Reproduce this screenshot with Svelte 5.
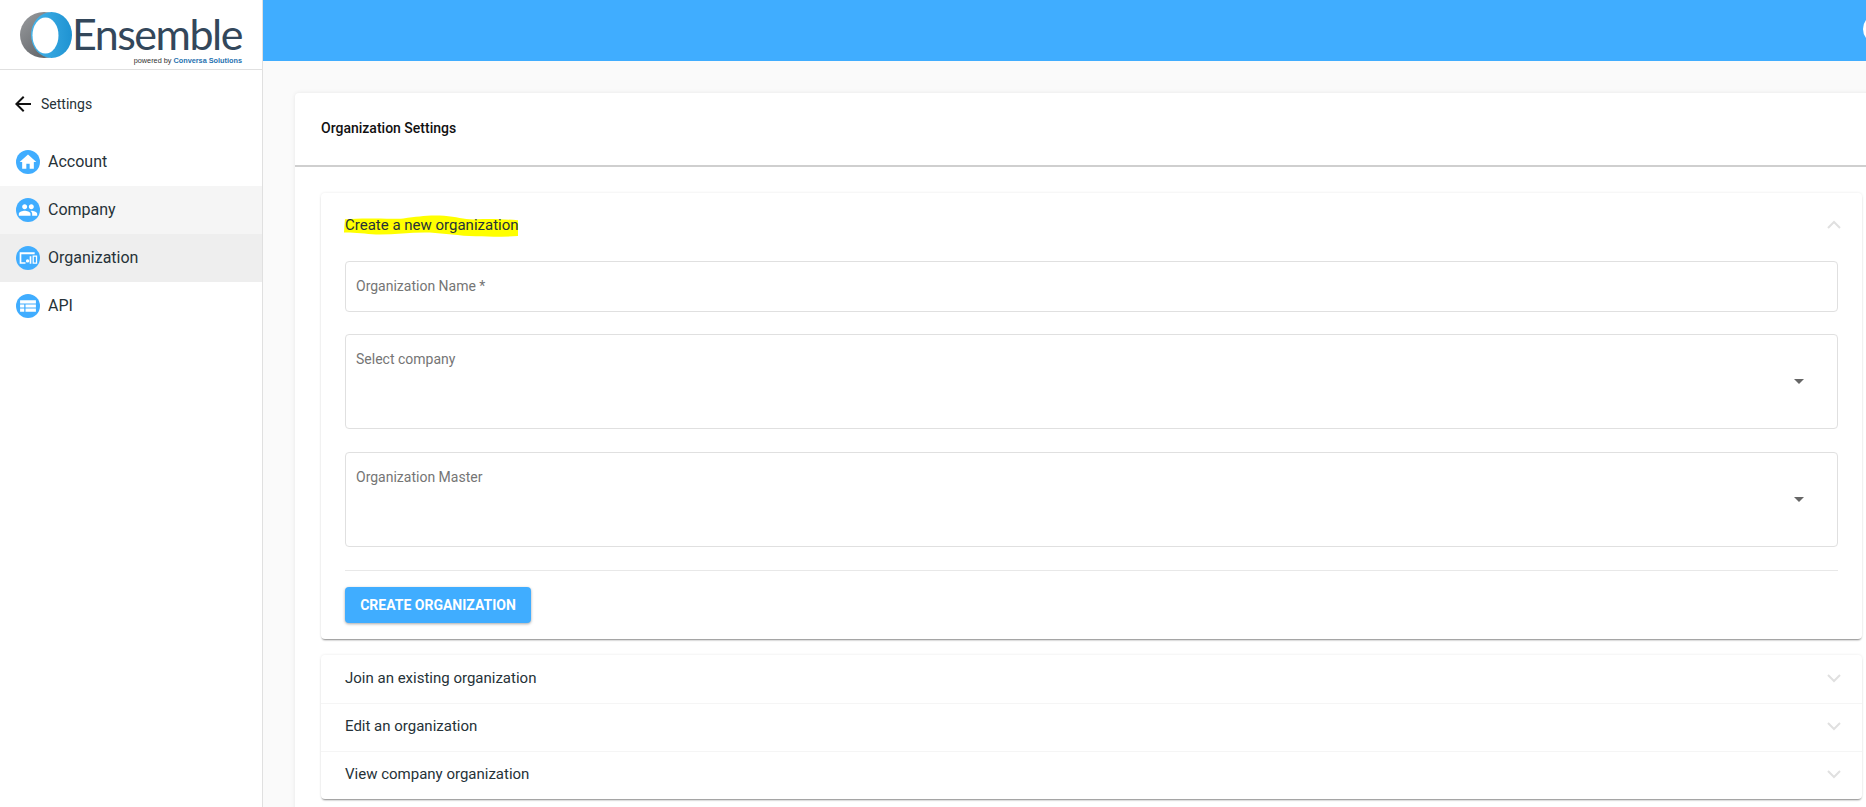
<script>
	const nav = [
		{ label: 'Account', icon: 'home' },
		{ label: 'Company', icon: 'people', state: 'hover' },
		{ label: 'Organization', icon: 'org', state: 'active' },
		{ label: 'API', icon: 'table' }
	];
	const closedPanels = ['Join an existing organization', 'Edit an organization', 'View company organization'];
</script>

<div class="page">
	<aside class="sidebar">
		<div class="brand">
			<svg class="ring" viewBox="0 0 52 46" width="52" height="46">
				<defs>
					<linearGradient id="ringGrey" x1="0" x2="1" y1="0" y2="1">
						<stop offset="0" stop-color="#9a9c9f" />
						<stop offset="1" stop-color="#505458" />
					</linearGradient>
					<linearGradient id="ringBlue" x1="0" x2="1" y1="0" y2="0">
						<stop offset="0" stop-color="#45b4ea" />
						<stop offset="1" stop-color="#1f93d2" />
					</linearGradient>
				</defs>
				<ellipse cx="24" cy="23" rx="24" ry="23" fill="url(#ringGrey)" />
				<ellipse cx="31.500" cy="23" rx="20.500" ry="23" fill="url(#ringBlue)" />
				<ellipse cx="25.500" cy="23.500" rx="13" ry="18" fill="#fff" />
			</svg>
			<div class="wordmark">
				<span class="name">Ensemble</span>
				<span class="powered">powered by <b>Conversa Solutions</b></span>
			</div>
		</div>

		<div class="back">
			<svg viewBox="0 0 24 24" width="24" height="24"><path fill="#111" d="M20 11H7.830l5.590-5.590L12 4l-8 8 8 8 1.410-1.410L7.830 13H20v-2z" /></svg>
			<span>Settings</span>
		</div>

		<nav>
			{#each nav as item}
				<div class="nav-item {item.state ?? ''}">
					<span class="nav-icon">
						<svg viewBox="0 0 24 24" width="20" height="20" fill="#fff">
							{#if item.icon === 'home'}
								<path d="M10 20v-6h4v6h5v-8h3L12 3 2 12h3v8z" />
							{:else if item.icon === 'people'}
								<path d="M16 11c1.660 0 2.990-1.340 2.990-3S17.660 5 16 5s-3 1.340-3 3 1.340 3 3 3zm-8 0c1.660 0 2.990-1.340 2.990-3S9.660 5 8 5 5 6.340 5 8s1.340 3 3 3zm0 2c-2.330 0-7 1.170-7 3.500V19h14v-2.500C15 14.170 10.330 13 8 13zm8 0c-.29 0-.62.02-.97.05 1.160.84 1.970 1.970 1.970 3.450V19h6v-2.500c0-2.330-4.670-3.500-7-3.500z" />
							{:else if item.icon === 'org'}
								<path d="M2 5h18v2.500H4V17h5v2H2zM14 10h2v9h-2zM17.500 9H23v10h-5.500zM19 10.500v7h2.500v-7zM11.500 13.500a2 2 0 1 1 0 4 2 2 0 0 1 0-4z" />
							{:else}
								<path d="M2.500 5h19v4h-19zM2.500 10.200h5v3.600h-5zM9 10.200h12.500v3.600H9zM2.500 15h5v4h-5zM9 15h12.500v4H9z" />
							{/if}
						</svg>
					</span>
					<span class="nav-label">{item.label}</span>
				</div>
			{/each}
		</nav>
	</aside>

	<div class="body">
		<header class="topbar"><span class="avatar"></span></header>

		<main class="content">
			<section class="card">
				<div class="card-title">Organization Settings</div>
				<div class="card-body">
					<div class="panel">
						<div class="panel-head open">
							<svg class="marker" viewBox="0 0 180 26" width="175" height="23" preserveAspectRatio="none">
								<path fill="#ffff00" d="M2 6C22 4 48 6 62 5 78 3 86 1 104 2c14 1 22 5 34 4 14-1 26 0 42 1v18c-18 1-32 1-50 0C114 24 98 21 84 21 66 21 48 24 30 23 20 22 8 21 1 21z" />
							</svg>
							<span class="head-text">Create a new organization</span>
							<svg class="chev" viewBox="0 0 24 24" width="24" height="24"><path fill="none" stroke="#e0e0e0" stroke-width="2" d="M6 15l6-6 6 6" /></svg>
						</div>
						<div class="panel-body">
							<div class="field short"><span>Organization Name *</span></div>
							<div class="field"><span>Select company</span><i class="caret"></i></div>
							<div class="field"><span>Organization Master</span><i class="caret"></i></div>
							<hr />
							<button type="button">CREATE ORGANIZATION</button>
						</div>
					</div>

					<div class="panel stack">
						{#each closedPanels as title}
							<div class="panel-head">
								<span class="head-text">{title}</span>
								<svg class="chev" viewBox="0 0 24 24" width="24" height="24"><path fill="none" stroke="#e0e0e0" stroke-width="2" d="M6 9l6 6 6-6" /></svg>
							</div>
						{/each}
					</div>
				</div>
			</section>
		</main>
	</div>
</div>

<style>
	:global(body) { margin: 0; overflow: hidden; background: #fafafa; }
	.page { display: flex; height: 807px; overflow: hidden; font-family: Roboto, "Liberation Sans", sans-serif; color: #263238; }

	.sidebar { flex: 0 0 263px; width: 263px; box-sizing: border-box; background: #fff; border-right: 1px solid #e0e0e0; overflow: hidden; }
	.brand { height: 70px; box-sizing: border-box; border-bottom: 1px solid #e0e0e0; display: flex; align-items: flex-start; padding: 12px 0 0 20px; }
	.ring { flex: none; }
	.wordmark { display: flex; flex-direction: column; margin-left: 0; width: 170px; }
	.name { font-family: Lato, sans-serif; font-size: 43px; line-height: 43px; letter-spacing: -1.500px; color: #33475b; white-space: nowrap; }
	.powered { font-family: "Liberation Sans", sans-serif; font-size: 7.300px; line-height: 9px; margin-top: 1px; text-align: right; color: #333; white-space: nowrap; }
	.powered b { color: #1f72b0; }

	.back { display: flex; align-items: center; gap: 6px; height: 68px; padding-left: 11px; font-size: 14px; box-sizing: border-box; }
	.nav-item { display: flex; align-items: center; gap: 8px; height: 48px; padding-left: 16px; font-size: 16px; }
	.nav-label { margin-bottom: 2px; }
	.nav-item.hover { background: #f5f5f5; }
	.nav-item.active { background: #eeeeee; }
	.nav-icon { width: 24px; height: 24px; border-radius: 50%; background: #40adff; display: flex; align-items: center; justify-content: center; }

	.body { flex: 1; min-width: 0; }
	.topbar { height: 61px; background: #40adff; position: relative; overflow: hidden; }
	.avatar { position: absolute; left: 1600px; top: 14px; width: 30px; height: 30px; border-radius: 50%; background: #fff; }

	.content { padding: 32px 0 0 32px; }
	.card { width: 1600px; background: #fff; border-radius: 4px; box-shadow: 0 0 4px rgba(0,0,0,0.08); }
	.card-title { height: 74px; box-sizing: border-box; border-bottom: 2px solid #cfcfcf; display: flex; align-items: center; padding: 0 0 2px 26px; font-size: 14px; font-weight: 500; color: #111; }
	.card-body { padding: 26px 0 40px 26px; }

	.panel { width: 1541px; background: #fff; border-radius: 4px; box-shadow: 0 2px 2px -1px rgba(0,0,0,0.45), 0 0 3px rgba(0,0,0,0.09); }
	.panel.stack { margin-top: 16px; }
	.panel-head { position: relative; height: 48px; box-sizing: border-box; display: flex; align-items: center; justify-content: space-between; padding: 0 16px 0 24px; font-size: 15px; }
	.panel-head.open { height: 64px; }
	.stack .panel-head { padding-bottom: 2px; }
	.stack .panel-head + .panel-head { border-top: 1px solid #f5f5f5; padding-bottom: 3px; }
	.head-text { position: relative; }
	.marker { position: absolute; left: 22px; top: 21px; }

	.panel-body { padding: 4px 24px 16px; }
	.field { position: relative; height: 95px; box-sizing: border-box; border: 1px solid #e0e0e0; border-radius: 4px; padding: 16px 10px; font-size: 14px; color: #757575; margin-bottom: 23px; }
	.field.short { height: 51px; margin-bottom: 22px; }
	.caret { position: absolute; right: 33px; top: 44px; width: 0; height: 0; border-left: 5px solid transparent; border-right: 5px solid transparent; border-top: 5px solid #666; }
	hr { border: 0; border-top: 1px solid #e8e8e8; margin: 0 0 16px; }
	button { display: block; height: 36px; width: 186px; border: 0; border-radius: 4px; background: #40adff; color: #fff; font: 700 14px Roboto, sans-serif; box-shadow: 0 1px 3px rgba(0,0,0,0.35); padding: 0; }
</style>
